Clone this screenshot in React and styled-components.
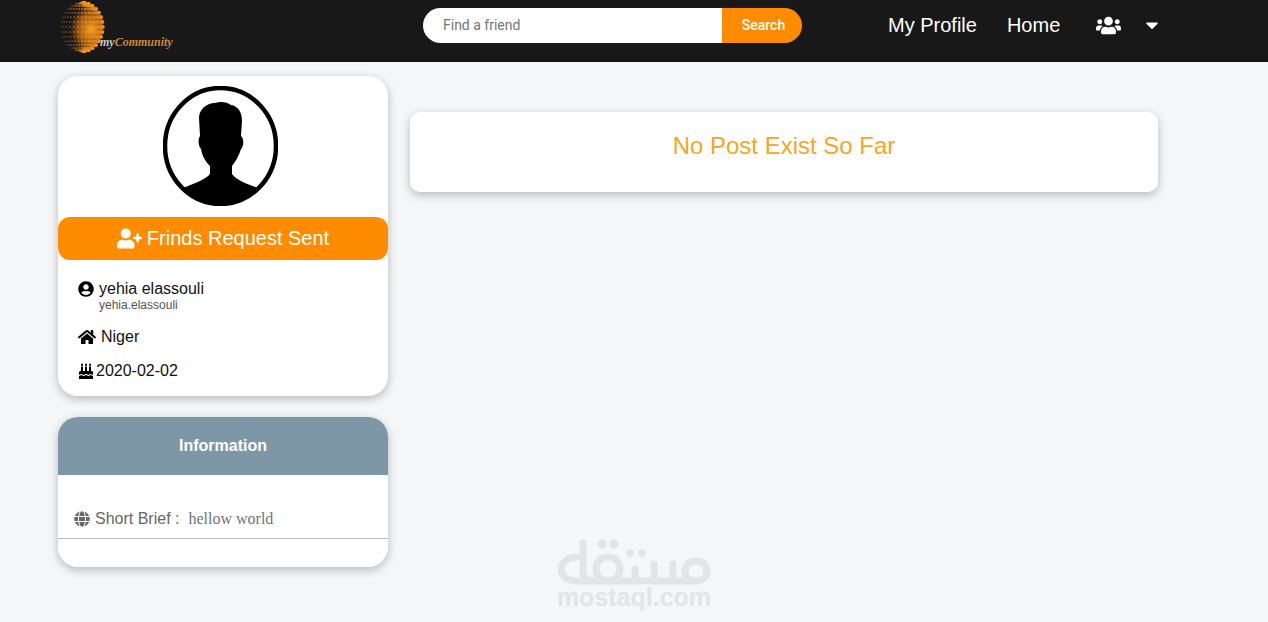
import React from 'react';
import styled, { createGlobalStyle } from 'styled-components';
import {
  FaUsers, FaCaretDown, FaUserPlus, FaUserCircle, FaHome, FaBirthdayCake, FaGlobe,
} from 'react-icons/fa';

const GlobalStyle = createGlobalStyle`
  html, body {
    margin: 0;
    padding: 0;
    background: #f5f6f8;
    font-family: "Liberation Sans", Arial, sans-serif;
  }
`;

const Page = styled.div`
  position: relative;
  height: 622px;
  overflow: hidden;
`;

const Nav = styled.nav`
  height: 62px;
  background: #181818;
  display: flex;
  align-items: flex-start;
  padding-left: 58px;
`;

const LogoWrap = styled.div`
  position: relative;
  width: 115px;
  height: 62px;
  flex: none;
`;

const LogoText = styled.span`
  position: absolute;
  left: 42px;
  top: 35px;
  font-family: "Liberation Serif", serif;
  font-style: italic;
  font-weight: bold;
  font-size: 12px;
  white-space: nowrap;
  color: #c98a35;
  & b {
    color: #c9c9c9;
  }
`;

const SearchForm = styled.div`
  display: flex;
  width: 379px;
  height: 35px;
  margin: 8px 0 0 250px;
  flex: none;
  font-family: Roboto, sans-serif;
  font-size: 14px;
`;

const SearchInput = styled.div`
  width: 299px;
  background: #fff;
  color: #757575;
  border-radius: 18px 0 0 18px;
  padding-left: 20px;
  box-sizing: border-box;
  line-height: 35px;
`;

const SearchButton = styled.div`
  flex: 1;
  background: #ff8c00;
  color: #fff;
  font-weight: 500;
  text-align: center;
  border-radius: 0 18px 18px 0;
  line-height: 35px;
  padding-left: 3px;
`;

const NavLink = styled.a`
  color: #fff;
  font-size: 20px;
  line-height: 50px;
  margin-left: ${(p) => p.$gap}px;
  white-space: nowrap;
`;

const NavIcon = styled.span`
  color: #fff;
  display: flex;
  align-items: center;
  height: 50px;
  margin-left: ${(p) => p.$gap}px;
  font-size: ${(p) => p.$size}px;
`;

const Content = styled.div`
  display: flex;
  align-items: flex-start;
  padding: 14px 0 0 58px;
`;

const Sidebar = styled.aside`
  width: 330px;
  flex: none;
  display: flex;
  flex-direction: column;
  gap: 21px;
`;

const Card = styled.section`
  background: #fff;
  border-radius: 20px;
  box-shadow: 0 3px 10px rgba(0, 0, 0, 0.25);
  overflow: hidden;
  height: ${(p) => p.$height}px;
`;

const AvatarRow = styled.div`
  display: flex;
  justify-content: center;
  padding: 10px 5px 0 0;
`;

const RequestButton = styled.div`
  height: 43px;
  margin-top: 11px;
  background: #ff8c00;
  color: #fff;
  border-radius: 12px;
  display: flex;
  align-items: center;
  justify-content: center;
  gap: 5px;
  font-size: 20px;
`;

const Details = styled.div`
  padding: 20px 0 0 20px;
  color: #111;
  font-size: 16px;
`;

const DetailRow = styled.div`
  display: flex;
  align-items: center;
  gap: ${(p) => p.$gap || 5}px;
  height: 18px;
  margin-bottom: ${(p) => p.$after}px;
  & svg {
    color: #000;
    flex: none;
    font-size: ${(p) => p.$icon || 16}px;
  }
`;

const Username = styled.div`
  font-size: 12px;
  line-height: 14px;
  color: #555;
  padding-left: 21px;
  margin-bottom: 16px;
`;

const InfoHeader = styled.header`
  height: 58px;
  background: #7e97a6;
  color: #fff;
  font-weight: bold;
  font-size: 16px;
  line-height: 58px;
  text-align: center;
`;

const BriefRow = styled.div`
  height: 64px;
  box-sizing: border-box;
  padding: 25px 0 0 16px;
  border-bottom: 1px solid #bbb;
  display: flex;
  align-items: center;
  color: #666;
  font-size: 16px;
  & svg {
    flex: none;
    margin-right: 5px;
  }
`;

const BriefValue = styled.span`
  font-family: "Liberation Serif", serif;
  color: #6c757d;
  margin-left: 9px;
`;

const Main = styled.main`
  width: 748px;
  margin: 36px 0 0 22px;
`;

const PostCard = styled.div`
  height: 80px;
  background: #fff;
  border-radius: 10px;
  box-shadow: 0 3px 10px rgba(0, 0, 0, 0.25);
  color: #f5a623;
  font-size: 24px;
  line-height: 67px;
  text-align: center;
`;

const Watermark = styled.div`
  position: absolute;
  left: 556px;
  top: 538px;
  width: 156px;
  text-align: center;
  color: #e3e4e6;
  font-weight: bold;
  font-size: 25px;
  line-height: 18px;
  & svg {
    display: block;
  }
`;

// dotted globe of the logo: dots grow and brighten towards the lower right
function LogoGlobe() {
  const dots = [];
  const cx = 24;
  const cy = 27;
  for (let row = -7; row <= 7; row += 1) {
    const lat = (row / 7.6) * (Math.PI / 2);
    const y = cy + Math.sin(lat) * 24.5;
    const w = Math.cos(lat) * 21;
    for (let col = -7; col <= 7; col += 1) {
      const lon = (col / 7.6) * (Math.PI / 2);
      const x = cx + Math.sin(lon) * w;
      const light = (col + 7) / 14;
      dots.push(
        <circle
          key={`${row}-${col}`}
          cx={x}
          cy={y}
          r={0.5 + light * 1.4}
          fill={light > 0.5 ? '#f7931e' : '#c9721c'}
          opacity={0.55 + light * 0.45}
        />,
      );
    }
  }
  return (
    <svg width="48" height="54" viewBox="0 0 48 54" style={{ display: 'block' }}>
      <defs>
        <radialGradient id="globeGlow" cx="0.72" cy="0.55" r="0.5">
          <stop offset="0" stopColor="#f9a11f" />
          <stop offset="0.6" stopColor="#d97b14" stopOpacity="0.7" />
          <stop offset="1" stopColor="#b8661a" stopOpacity="0" />
        </radialGradient>
      </defs>
      {dots}
      <ellipse cx="24" cy="27" rx="21" ry="24.5" fill="url(#globeGlow)" />
    </svg>
  );
}

function Avatar() {
  return (
    <svg width="115" height="120" viewBox="0 0 115 120">
      <defs>
        <clipPath id="avatarClip">
          <ellipse cx="57.5" cy="60" rx="55.5" ry="58" />
        </clipPath>
      </defs>
      <ellipse cx="57.5" cy="60" rx="55.5" ry="58" fill="#fff" />
      <path
        clipPath="url(#avatarClip)"
        d="M52 17 C58 15 64 16 68 19 C75 20 79 26 79 35 L78 50 C81 52 81 60 78 63 C76 70 72 76 69 80 L69 88 C72 92 78 96 95 102 L112 120 L3 120 L20 102 C36 96 44 92 47 88 L47 80 C43 76 39 70 38 63 C35 60 35 52 37 50 L36 32 C36 24 43 17 52 17 Z"
        fill="#000"
      />
      <ellipse cx="57.5" cy="60" rx="55.5" ry="58" fill="none" stroke="#000" strokeWidth="4.5" />
    </svg>
  );
}

// mostaql wordmark, drawn as a logo with thick round strokes
function WatermarkLogo() {
  return (
    <svg width="156" height="50" viewBox="0 0 156 50" fill="none" stroke="#e3e4e6" strokeWidth="7" strokeLinecap="round">
      <path d="M20 19 C10 20 5 25 5 31 C5 38 11 43 20 43 L140 43" />
      <path d="M27 5 L27 33 C27 39 30 43 36 43" />
      <path d="M52 19 C44 19 40 25 40 31 C40 38 45 43 52 43 C59 43 64 38 64 31 C64 25 60 19 52 19 Z" />
      <path d="M79 31 L79 43 M98 26 L98 43 M117 26 L117 43" />
      <path d="M140 23 C133 23 129 27 129 33 C129 39 133 43 140 43 C147 43 151 39 151 33 C151 27 147 23 140 23 Z" />
      <g fill="#e3e4e6" stroke="none">
        <circle cx="46" cy="6" r="4.5" />
        <circle cx="58" cy="6" r="4.5" />
        <circle cx="74" cy="15" r="3.8" />
        <circle cx="86" cy="15" r="3.8" />
      </g>
    </svg>
  );
}

export default function App() {
  return (
    <Page>
      <GlobalStyle />
      <Nav>
        <LogoWrap>
          <LogoGlobe />
          <LogoText><b>my</b>Community</LogoText>
        </LogoWrap>
        <SearchForm>
          <SearchInput>Find a friend</SearchInput>
          <SearchButton>Search</SearchButton>
        </SearchForm>
        <NavLink $gap={86}>My Profile</NavLink>
        <NavLink $gap={30}>Home</NavLink>
        <NavIcon $gap={36} $size={25}><FaUsers /></NavIcon>
        <NavIcon $gap={21} $size={20}><FaCaretDown /></NavIcon>
      </Nav>
      <Content>
        <Sidebar>
          <Card $height={320}>
            <AvatarRow><Avatar /></AvatarRow>
            <RequestButton><FaUserPlus size={25} />Frinds Request Sent</RequestButton>
            <Details>
              <DetailRow $after={0} $gap={5}><FaUserCircle />yehia elassouli</DetailRow>
              <Username>yehia.elassouli</Username>
              <DetailRow $after={16} $gap={5} $icon={18}><FaHome />Niger</DetailRow>
              <DetailRow $after={0} $gap={2} $icon={16}><FaBirthdayCake />2020-02-02</DetailRow>
            </Details>
          </Card>
          <Card $height={150}>
            <InfoHeader>Information</InfoHeader>
            <BriefRow>
              <FaGlobe />Short Brief :
              <BriefValue>hellow world</BriefValue>
            </BriefRow>
          </Card>
        </Sidebar>
        <Main>
          <PostCard>No Post Exist So Far</PostCard>
        </Main>
      </Content>
      <Watermark>
        <WatermarkLogo />
        mostaql.com
      </Watermark>
    </Page>
  );
}
